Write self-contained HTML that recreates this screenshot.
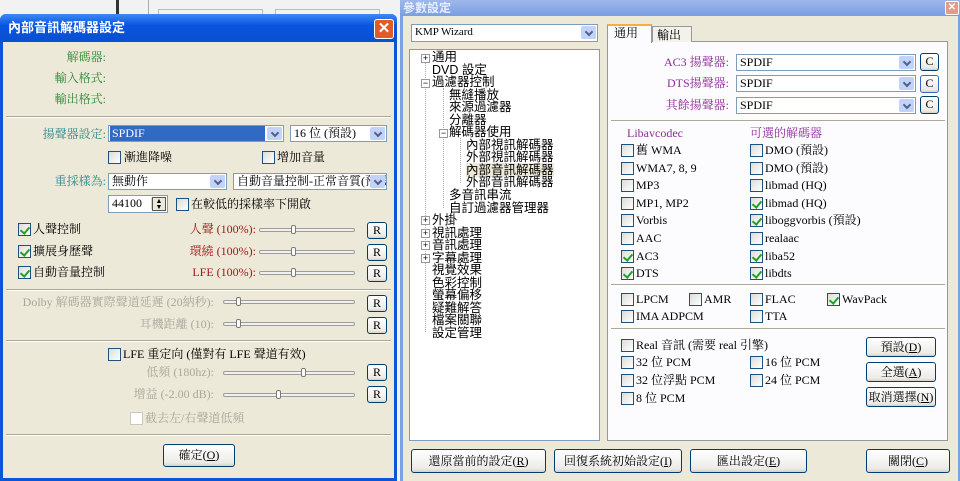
<!DOCTYPE html>
<html><head><meta charset="utf-8"><style>
*{box-sizing:border-box;margin:0;padding:0}
body{width:960px;height:481px;overflow:hidden;background:#f2f2f2;position:relative;font-family:"Liberation Serif","Noto Serif CJK SC",serif;font-size:12px;color:#000}
.a{position:absolute;white-space:nowrap;line-height:14px}
.r{text-align:right}
.cb{position:absolute;width:13px;height:13px;border:1px solid #1c5180;background:linear-gradient(135deg,#dcdcd7,#fff)}
.cb.k::after{content:"";position:absolute;left:3px;top:1px;width:4px;height:7px;border:solid #21a121;border-width:0 2px 2px 0;transform:rotate(40deg)}
.cb.d{border-color:#cac8bb;background:#fff}
.sel{position:absolute;height:17px;border:1px solid #7f9db9;background:#fff;padding-left:3px;line-height:15px;white-space:nowrap;overflow:hidden}
.sel::after{content:"";position:absolute;right:1px;top:1px;width:15px;height:13px;background:#c1d3fb;border-radius:2px}
.sel::before{content:"";position:absolute;right:5px;top:4px;width:4px;height:4px;border:solid #4d6185;border-width:0 2px 2px 0;transform:rotate(45deg);z-index:2}
.btn{position:absolute;border:1px solid #003c74;border-radius:3px;background:linear-gradient(#fff,#ecebe6 85%,#d6d0c5);text-align:center;font-size:12px;white-space:nowrap}
.R{width:20px;height:17px;line-height:15px}
.sl{position:absolute;height:4px;border:1px solid #9d9c99;border-radius:2px;background:#f0f0f0}
.th{position:absolute;width:5px;height:9px;top:-4px;border:1px solid #7a7a7a;background:#fff;border-radius:2px}
.sep{position:absolute;height:2px;border-top:1px solid #aca899;border-bottom:1px solid #fff}
.g{color:#2c8a36}.tl{color:#2a8a8a}.red{color:#a01818}.gr{color:#a9a79c}.pu{color:#8d2b97}
.ex{position:absolute;width:9px;height:9px;border:1px solid #999;background:#fff;font:9px/7px sans-serif;text-align:center}
</style></head><body>
<div style="position:absolute;left:116px;top:0;width:3px;height:14px;background:#333"></div>
<div style="position:absolute;left:148px;top:0;width:1px;height:14px;background:#aaa"></div>
<div style="position:absolute;left:158px;top:9px;width:105px;height:6px;border:1px solid #bbb;border-bottom:0"></div>
<div style="position:absolute;left:275px;top:9px;width:105px;height:6px;border:1px solid #bbb;border-bottom:0"></div>

<!-- LEFT DIALOG -->
<div style="position:absolute;left:0;top:14px;width:397px;height:467px;background:#0a56d6;border-radius:6px 6px 0 0"></div>
<div style="position:absolute;left:0;top:14px;width:397px;height:28px;background:linear-gradient(#3d8af5,#0a55e0 40%,#0850d0);border-radius:6px 6px 0 0"></div>
<div class="a" style="left:8px;top:21px;color:#fff;font-weight:bold;font-size:13px;font-family:'Liberation Sans','Noto Sans CJK SC',sans-serif">內部音訊解碼器設定</div>
<div style="position:absolute;left:374px;top:19px;width:20px;height:20px;border:1px solid #fff;border-radius:3px;background:#e05a2a;color:#fff;text-align:center;font:bold 15px/18px 'Liberation Sans',sans-serif">✕</div>
<div style="position:absolute;left:3px;top:42px;width:391px;height:436px;background:#ece9d8"></div>

<div class="a r g" style="left:20px;width:86px;top:50px">解碼器:</div>
<div class="a r g" style="left:20px;width:86px;top:71px">輸入格式:</div>
<div class="a r g" style="left:20px;width:86px;top:92px">輸出格式:</div>
<div class="sep" style="left:6px;width:385px;top:116px"></div>

<div class="a r tl" style="left:20px;width:86px;top:127px">揚聲器設定:</div>
<div class="sel" style="left:108px;top:125px;width:176px"><span style="background:#316ac5;color:#fff;display:inline-block;width:155px;margin-left:-2px;padding-left:2px">SPDIF</span></div>
<div class="sel" style="left:290px;top:125px;width:97px">16 位 (預設)</div>
<div class="cb" style="left:108px;top:151px"></div><div class="a" style="left:124px;top:150px">漸進降噪</div>
<div class="cb" style="left:262px;top:151px"></div><div class="a" style="left:277px;top:150px">增加音量</div>
<div class="a r tl" style="left:20px;width:86px;top:174px">重採樣為:</div>
<div class="sel" style="left:108px;top:173px;width:119px">無動作</div>
<div class="sel" style="left:233px;top:173px;width:154px;padding-right:16px">自動音量控制-正常音質(預設</div>
<div class="sel" style="left:108px;top:195px;width:60px;height:18px">44100</div>
<div style="position:absolute;left:152px;top:197px;width:14px;height:14px;background:#ece9d8;border:1px solid #555;z-index:3;font-size:7px;line-height:6px;text-align:center">▲<br>▼</div>
<div class="cb" style="left:176px;top:198px"></div><div class="a" style="left:191px;top:197px">在較低的採樣率下開啟</div>

<div class="cb k" style="left:18px;top:223px"></div><div class="a" style="left:33px;top:222px">人聲控制</div>
<div class="a r red" style="left:150px;width:106px;top:222px">人聲 (100%):</div>
<div class="sl" style="left:259px;top:228px;width:96px"><div class="th" style="left:31px"></div></div>
<div class="btn R" style="left:367px;top:222px">R</div>
<div class="cb k" style="left:18px;top:245px"></div><div class="a" style="left:33px;top:244px">擴展身歷聲</div>
<div class="a r red" style="left:150px;width:106px;top:244px">環繞 (100%):</div>
<div class="sl" style="left:259px;top:250px;width:96px"><div class="th" style="left:31px"></div></div>
<div class="btn R" style="left:367px;top:244px">R</div>
<div class="cb k" style="left:18px;top:266px"></div><div class="a" style="left:33px;top:265px">自動音量控制</div>
<div class="a r red" style="left:150px;width:106px;top:265px">LFE (100%):</div>
<div class="sl" style="left:259px;top:271px;width:96px"><div class="th" style="left:31px"></div></div>
<div class="btn R" style="left:367px;top:265px">R</div>
<div class="sep" style="left:6px;width:385px;top:289px"></div>

<div class="a r gr" style="left:20px;width:194px;top:295px">Dolby 解碼器實際聲道延遲 (20納秒):</div>
<div class="sl" style="left:223px;top:300px;width:132px"><div class="th" style="left:12px"></div></div>
<div class="btn R" style="left:367px;top:295px">R</div>
<div class="a r gr" style="left:20px;width:194px;top:317px">耳機距離 (10):</div>
<div class="sl" style="left:223px;top:322px;width:132px"><div class="th" style="left:12px"></div></div>
<div class="btn R" style="left:367px;top:317px">R</div>
<div class="sep" style="left:6px;width:385px;top:340px"></div>

<div class="cb" style="left:108px;top:348px"></div><div class="a" style="left:123px;top:347px">LFE 重定向 (僅對有 LFE 聲道有效)</div>
<div class="a r gr" style="left:20px;width:194px;top:365px">低頻 (180hz):</div>
<div class="sl" style="left:223px;top:371px;width:132px"><div class="th" style="left:77px"></div></div>
<div class="btn R" style="left:367px;top:364px">R</div>
<div class="a r gr" style="left:20px;width:194px;top:387px">增益 (-2.00 dB):</div>
<div class="sl" style="left:223px;top:393px;width:132px"><div class="th" style="left:52px"></div></div>
<div class="btn R" style="left:367px;top:386px">R</div>
<div class="cb d" style="left:130px;top:412px"></div><div class="a gr" style="left:145px;top:411px">截去左/右聲道低頻</div>
<div class="sep" style="left:6px;width:385px;top:434px"></div>
<div class="btn" style="left:163px;top:444px;width:72px;height:23px;line-height:21px">確定(<u>O</u>)</div>

<!-- RIGHT WINDOW -->
<div style="position:absolute;left:400px;top:0;width:560px;height:481px;background:#7d9fe6"></div>
<div style="position:absolute;left:400px;top:0;width:560px;height:16px;background:linear-gradient(#9db9eb,#7a9de3)"></div>
<div class="a" style="left:403px;top:1px;color:#e8eefc;font-weight:bold;font-family:'Liberation Sans','Noto Sans CJK SC',sans-serif">參數設定</div>
<div style="position:absolute;left:945px;top:1px;width:14px;height:14px;background:#e49a8a;border:1px solid #fff;border-radius:2px;color:#fff;font:bold 10px/12px sans-serif;text-align:center">✕</div>
<div style="position:absolute;left:403px;top:16px;width:555px;height:465px;background:#ece9d8"></div>

<div class="sel" style="left:411px;top:24px;width:187px;height:18px;font-size:11px">KMP Wizard</div>
<div style="position:absolute;left:409px;top:49px;width:191px;height:392px;background:#fff;border:1px solid #7f9db9"></div>
<div style="position:absolute;left:425px;top:60px;width:1px;height:272px;border-left:1px dotted #aaa"></div>
<div style="position:absolute;left:443px;top:88px;width:1px;height:120px;border-left:1px dotted #aaa"></div>
<div style="position:absolute;left:460px;top:138px;width:1px;height:45px;border-left:1px dotted #aaa"></div>
<div class="a" style="left:432px;top:51px;line-height:12.55px;font-size:12.5px;font-family:'Liberation Sans','Noto Sans CJK SC',sans-serif">
通用<br>DVD 設定<br>過濾器控制<br><span style="margin-left:17px">無縫播放</span><br><span style="margin-left:17px">來源過濾器</span><br><span style="margin-left:17px">分離器</span><br><span style="margin-left:17px">解碼器使用</span><br><span style="margin-left:34px">內部視訊解碼器</span><br><span style="margin-left:34px">外部視訊解碼器</span><br><span style="margin-left:34px;background:#ece9d8">內部音訊解碼器</span><br><span style="margin-left:34px">外部音訊解碼器</span><br><span style="margin-left:17px">多音訊串流</span><br><span style="margin-left:17px">自訂過濾器管理器</span><br>外掛<br>視訊處理<br>音訊處理<br>字幕處理<br>視覺效果<br>色彩控制<br>螢幕偏移<br>疑難解答<br>檔案關聯<br>設定管理</div>
<div class="ex" style="left:421px;top:54px">+</div>
<div class="ex" style="left:421px;top:79px">−</div>
<div class="ex" style="left:439px;top:129px">−</div>
<div class="ex" style="left:421px;top:216px">+</div>
<div class="ex" style="left:421px;top:229px">+</div>
<div class="ex" style="left:421px;top:241px">+</div>
<div class="ex" style="left:421px;top:254px">+</div>

<!-- tabs -->
<div style="position:absolute;left:607px;top:41px;width:341px;height:400px;background:#fcfcfe;border:1px solid #919b9c"></div>
<div style="position:absolute;left:607px;top:24px;width:45px;height:19px;background:#fcfcfe;border:1px solid #919b9c;border-top:2px solid #f4b03a;border-bottom:0"></div>
<div class="a" style="left:614px;top:26px">通用</div>
<div style="position:absolute;left:652px;top:26px;width:40px;height:16px;background:#f2f1ea;border:1px solid #919b9c;border-bottom:0"></div>
<div class="a" style="left:657px;top:28px">輸出</div>

<div class="a r pu" style="left:580px;width:149px;top:55px">AC3 揚聲器:</div>
<div class="a r pu" style="left:580px;width:149px;top:76px">DTS揚聲器:</div>
<div class="a r pu" style="left:580px;width:149px;top:98px">其餘揚聲器:</div>
<div class="sel" style="left:736px;top:54px;width:180px">SPDIF</div>
<div class="sel" style="left:736px;top:75px;width:180px">SPDIF</div>
<div class="sel" style="left:736px;top:97px;width:180px">SPDIF</div>
<div class="btn R" style="left:920px;top:53px;width:19px;height:18px">C</div>
<div class="btn R" style="left:920px;top:75px;width:19px;height:18px;border-color:#3566c8">C</div>
<div class="btn R" style="left:920px;top:96px;width:19px;height:18px">C</div>
<div class="sep" style="left:611px;width:334px;top:120px"></div>

<div class="a pu" style="left:627px;top:126px">Libavcodec</div>
<div class="a pu" style="left:750px;top:126px">可選的解碼器</div>
<div class="cb" style="left:621px;top:144px"></div><div class="a" style="left:636px;top:143px">舊 WMA</div>
<div class="cb" style="left:621px;top:162px"></div><div class="a" style="left:636px;top:161px">WMA7, 8, 9</div>
<div class="cb" style="left:621px;top:179px"></div><div class="a" style="left:636px;top:178px">MP3</div>
<div class="cb" style="left:621px;top:197px"></div><div class="a" style="left:636px;top:196px">MP1, MP2</div>
<div class="cb" style="left:621px;top:214px"></div><div class="a" style="left:636px;top:213px">Vorbis</div>
<div class="cb" style="left:621px;top:232px"></div><div class="a" style="left:636px;top:231px">AAC</div>
<div class="cb k" style="left:621px;top:250px"></div><div class="a" style="left:636px;top:249px">AC3</div>
<div class="cb k" style="left:621px;top:267px"></div><div class="a" style="left:636px;top:266px">DTS</div>
<div class="cb" style="left:750px;top:144px"></div><div class="a" style="left:765px;top:143px">DMO (預設)</div>
<div class="cb" style="left:750px;top:162px"></div><div class="a" style="left:765px;top:161px">DMO (預設)</div>
<div class="cb" style="left:750px;top:179px"></div><div class="a" style="left:765px;top:178px">libmad (HQ)</div>
<div class="cb k" style="left:750px;top:197px"></div><div class="a" style="left:765px;top:196px">libmad (HQ)</div>
<div class="cb k" style="left:750px;top:214px"></div><div class="a" style="left:765px;top:213px">liboggvorbis (預設)</div>
<div class="cb" style="left:750px;top:232px"></div><div class="a" style="left:765px;top:231px">realaac</div>
<div class="cb k" style="left:750px;top:250px"></div><div class="a" style="left:765px;top:249px">liba52</div>
<div class="cb k" style="left:750px;top:267px"></div><div class="a" style="left:765px;top:266px">libdts</div>
<div class="sep" style="left:611px;width:334px;top:284px"></div>

<div class="cb" style="left:621px;top:293px"></div><div class="a" style="left:636px;top:292px">LPCM</div>
<div class="cb" style="left:689px;top:293px"></div><div class="a" style="left:704px;top:292px">AMR</div>
<div class="cb" style="left:750px;top:293px"></div><div class="a" style="left:765px;top:292px">FLAC</div>
<div class="cb k" style="left:827px;top:293px"></div><div class="a" style="left:842px;top:292px">WavPack</div>
<div class="cb" style="left:621px;top:310px"></div><div class="a" style="left:636px;top:309px">IMA ADPCM</div>
<div class="cb" style="left:750px;top:310px"></div><div class="a" style="left:765px;top:309px">TTA</div>
<div class="sep" style="left:611px;width:334px;top:328px"></div>

<div class="cb" style="left:621px;top:339px"></div><div class="a" style="left:636px;top:338px">Real 音訊 (需要 real 引擎)</div>
<div class="cb" style="left:621px;top:356px"></div><div class="a" style="left:636px;top:355px">32 位 PCM</div>
<div class="cb" style="left:621px;top:374px"></div><div class="a" style="left:636px;top:373px">32 位浮點 PCM</div>
<div class="cb" style="left:621px;top:392px"></div><div class="a" style="left:636px;top:391px">8 位 PCM</div>
<div class="cb" style="left:750px;top:356px"></div><div class="a" style="left:765px;top:355px">16 位 PCM</div>
<div class="cb" style="left:750px;top:374px"></div><div class="a" style="left:765px;top:373px">24 位 PCM</div>
<div class="btn" style="left:866px;top:337px;width:70px;height:20px;line-height:18px">預設(<u>D</u>)</div>
<div class="btn" style="left:866px;top:362px;width:70px;height:20px;line-height:18px">全選(<u>A</u>)</div>
<div class="btn" style="left:866px;top:387px;width:70px;height:20px;line-height:18px">取消選擇(<u>N</u>)</div>

<div class="btn" style="left:411px;top:449px;width:135px;height:24px;line-height:22px">還原當前的設定(<u>R</u>)</div>
<div class="btn" style="left:554px;top:449px;width:128px;height:24px;line-height:22px">回復系統初始設定(<u>I</u>)</div>
<div class="btn" style="left:690px;top:449px;width:117px;height:24px;line-height:22px">匯出設定(<u>E</u>)</div>
<div class="btn" style="left:866px;top:449px;width:84px;height:24px;line-height:22px">關閉(<u>C</u>)</div>
</body></html>
